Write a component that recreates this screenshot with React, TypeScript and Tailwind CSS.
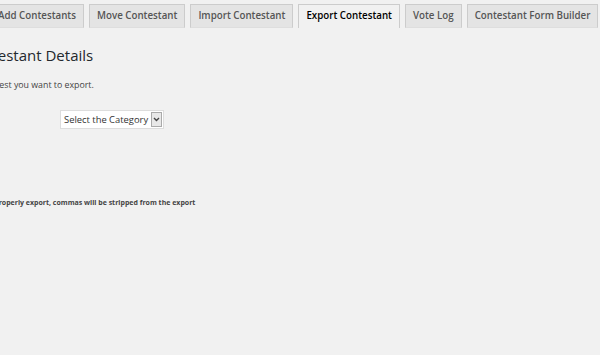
const tabs = [
  { label: "Add Contestants", active: false },
  { label: "Move Contestant", active: false },
  { label: "Import Contestant", active: false },
  { label: "Export Contestant", active: true },
  { label: "Vote Log", active: false },
  { label: "Contestant Form Builder", active: false },
];

const App = () => {
  return (
    <div
      className="h-[355px] w-[600px] overflow-hidden bg-[#f1f1f1] text-[#444]"
      style={{ fontFamily: '"Open Sans", "Noto Sans", sans-serif' }}
    >
      <div className="-ml-[10px] pt-[4px]">
        <div className="flex gap-[5px]">
          {tabs.map((tab) => (
            <div
              key={tab.label}
              className={`h-[24px] whitespace-nowrap border border-[#cccccc] px-[7px] text-[9.75px] font-semibold leading-[22px] ${
                tab.active
                  ? "border-b-0 bg-[#f1f1f1] text-black"
                  : "border-b-[#dedede] bg-[#e4e4e4] text-[#555]"
              }`}
            >
              {tab.label}
            </div>
          ))}
        </div>
      </div>

      <h2 className="-ml-[85px] mt-[17px] whitespace-nowrap text-[15px] font-normal leading-[20px] text-[#23282d]">
        Export Contestant Details
      </h2>
      <p className="-ml-[61px] mt-[14px] whitespace-nowrap text-[8.8px] leading-[13px] text-[#444]">
        Select the contest you want to export.
      </p>

      <div className="mt-[18px] ml-[60px] flex h-[19px] w-[104px] items-center border border-[#dddddd] bg-white">
        <span className="flex-1 whitespace-nowrap pl-[3px] text-[9.4px] leading-[17px] text-[#333]">
          Select the Category
        </span>
        <span className="mr-px flex h-[15px] w-[11px] items-center justify-center border border-[#aaaaaa] bg-[#e8e8e8]">
          <svg width="7" height="5" viewBox="0 0 7 5">
            <path d="M1 1 L3.5 3.5 L6 1" stroke="#444" strokeWidth="1.4" fill="none" />
          </svg>
        </span>
      </div>

      <p className="-ml-[37px] mt-[68px] whitespace-nowrap text-[7px] font-bold leading-[11px] text-[#444]">
        Note: To properly export, commas will be stripped from the export
      </p>
    </div>
  );
};

export default App;
